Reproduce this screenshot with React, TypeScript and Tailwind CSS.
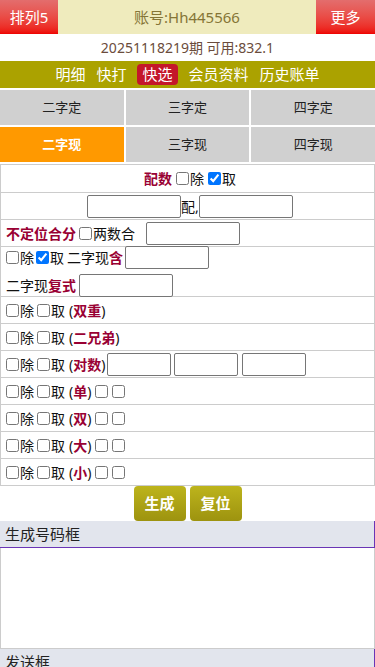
import { ReactNode } from 'react'

const font = { fontFamily: '"Noto Sans", "Noto Sans CJK SC", sans-serif' }

function Box({ checked = false }: { checked?: boolean }) {
  return (
    <input
      type="checkbox"
      defaultChecked={checked}
      className="m-0 mr-[1px] h-[13px] w-[13px] shrink-0 align-middle"
    />
  )
}

function Field({ w, className = '' }: { w: string; className?: string }) {
  return (
    <input
      type="text"
      className={`h-[23px] rounded-[2px] border border-[#767676] bg-white ${w} ${className}`}
    />
  )
}

function Red({ children }: { children: ReactNode }) {
  return <span className="font-bold text-[#990033]">{children}</span>
}

function Row({ children, className = '' }: { children: ReactNode; className?: string }) {
  return (
    <div className={`flex min-h-[27px] items-center border-b border-[#cccccc] pl-[5px] ${className}`}>
      {children}
    </div>
  )
}

function PickRow({ label, extra }: { label: string; extra?: ReactNode }) {
  return (
    <Row>
      <Box />
      <span>除</span>
      <span className="ml-[3px]" />
      <Box />
      <span>取</span>
      <span className="ml-[4px]">(</span>
      <Red>{label}</Red>
      <span>)</span>
      {extra}
    </Row>
  )
}

const tabs = [
  { name: '二字定', active: false },
  { name: '三字定', active: false },
  { name: '四字定', active: false },
  { name: '二字现', active: true },
  { name: '三字现', active: false },
  { name: '四字现', active: false },
]

const nav = ['明细', '快打', '快选', '会员资料', '历史账单']

export default function App() {
  return (
    <div className="w-[375px] bg-white text-[14px] text-[#111]" style={font}>
      <div className="flex h-[34px]">
        <div className="flex w-[58px] items-center justify-center bg-gradient-to-b from-[#e36d6d] to-[#ee0000] text-[15px] text-white">
          排列5
        </div>
        <div className="flex flex-1 items-center justify-center bg-[#efebbd] text-[15px] text-[#857536]">
          账号:Hh445566
        </div>
        <div className="flex w-[59px] items-center justify-center bg-gradient-to-b from-[#e36d6d] to-[#ee0000] text-[15px] text-white">
          更多
        </div>
      </div>
      <div className="flex h-[27px] items-center justify-center text-[14px] text-[#6b4c3c]">
        20251118219期 可用:832.1
      </div>
      <div className="flex h-[27px] items-center justify-center gap-[1px] bg-[#aba200] text-[15px] text-white">
        {nav.map((n) => (
          <span
            key={n}
            className={
              n === '快选'
                ? 'mx-[5px] rounded-[4px] bg-[#c4162a] px-[5px] leading-[21px]'
                : 'px-[5px] leading-[21px]'
            }
          >
            {n}
          </span>
        ))}
      </div>
      <div className="grid grid-cols-3 gap-[2px] pt-[2px]">
        {tabs.map((t) => (
          <div
            key={t.name}
            className={
              t.active
                ? 'flex h-[35px] items-center justify-center bg-[#ff9900] text-[13px] font-bold text-white'
                : 'flex h-[35px] items-center justify-center bg-[#d0d0d0] text-[13px] text-[#222]'
            }
          >
            {t.name}
          </div>
        ))}
      </div>
      <div className="mt-[2px] border-x border-t border-[#cccccc]">
        <Row className="h-[28px] justify-center pl-0">
          <Red>配数</Red>
          <span className="ml-[4px]" />
          <Box />
          <span>除</span>
          <span className="ml-[4px]" />
          <Box checked />
          <span>取</span>
        </Row>
        <Row className="h-[27px] justify-center pl-0">
          <Field w="w-[94px]" />
          <span>配,</span>
          <Field w="w-[94px]" />
        </Row>
        <Row className="h-[27px]">
          <Red>不定位合分</Red>
          <span className="ml-[3px]" />
          <Box />
          <span>两数合</span>
          <Field w="w-[94px]" className="ml-[11px]" />
        </Row>
        <div className="flex h-[50px] flex-col justify-center gap-[5px] border-b border-[#cccccc] pl-[5px]">
          <div className="flex items-center">
            <Box />
            <span>除</span>
            <span className="ml-[2px]" />
            <Box checked />
            <span>取</span>
            <span className="ml-[3px]">二字现</span>
            <Red>含</Red>
            <Field w="w-[84px]" className="ml-[2px]" />
          </div>
          <div className="flex items-center">
            <span>二字现</span>
            <Red>复式</Red>
            <Field w="w-[94px]" className="ml-[3px]" />
          </div>
        </div>
        <PickRow label="双重" />
        <PickRow label="二兄弟" />
        <PickRow
          label="对数"
          extra={
            <>
              <Field w="w-[64px]" className="ml-[2px]" />
              <Field w="w-[64px]" className="ml-[3px]" />
              <Field w="w-[64px]" className="ml-[4px]" />
            </>
          }
        />
        {['单', '双', '大', '小'].map((l) => (
          <PickRow
            key={l}
            label={l}
            extra={
              <>
                <span className="ml-[4px]" />
                <Box />
                <span className="ml-[3px]" />
                <Box />
              </>
            }
          />
        ))}
      </div>
      <div className="flex justify-center gap-[4px]">
        <button className="h-[35px] w-[52px] rounded-[4px] bg-gradient-to-b from-[#bdb41c] to-[#9d930f] text-[15px] font-bold text-white">
          生成
        </button>
        <button className="h-[35px] w-[52px] rounded-[4px] bg-gradient-to-b from-[#bdb41c] to-[#9d930f] text-[15px] font-bold text-white">
          复位
        </button>
      </div>
      <div className="flex h-[27px] items-center border-b border-r border-[#6a35b5] bg-[#e2e5ed] pl-[5px] text-[15px] text-[#222]">
        生成号码框
      </div>
      <textarea className="block h-[101px] w-full resize-none border-x border-b border-[#cccccc] bg-white" />
      <div className="flex h-[27px] items-center border-r border-[#6a35b5] bg-[#e2e5ed] pl-[5px] text-[15px] text-[#222]">
        发送框
      </div>
      <div className="h-[60px]" />
    </div>
  )
}
